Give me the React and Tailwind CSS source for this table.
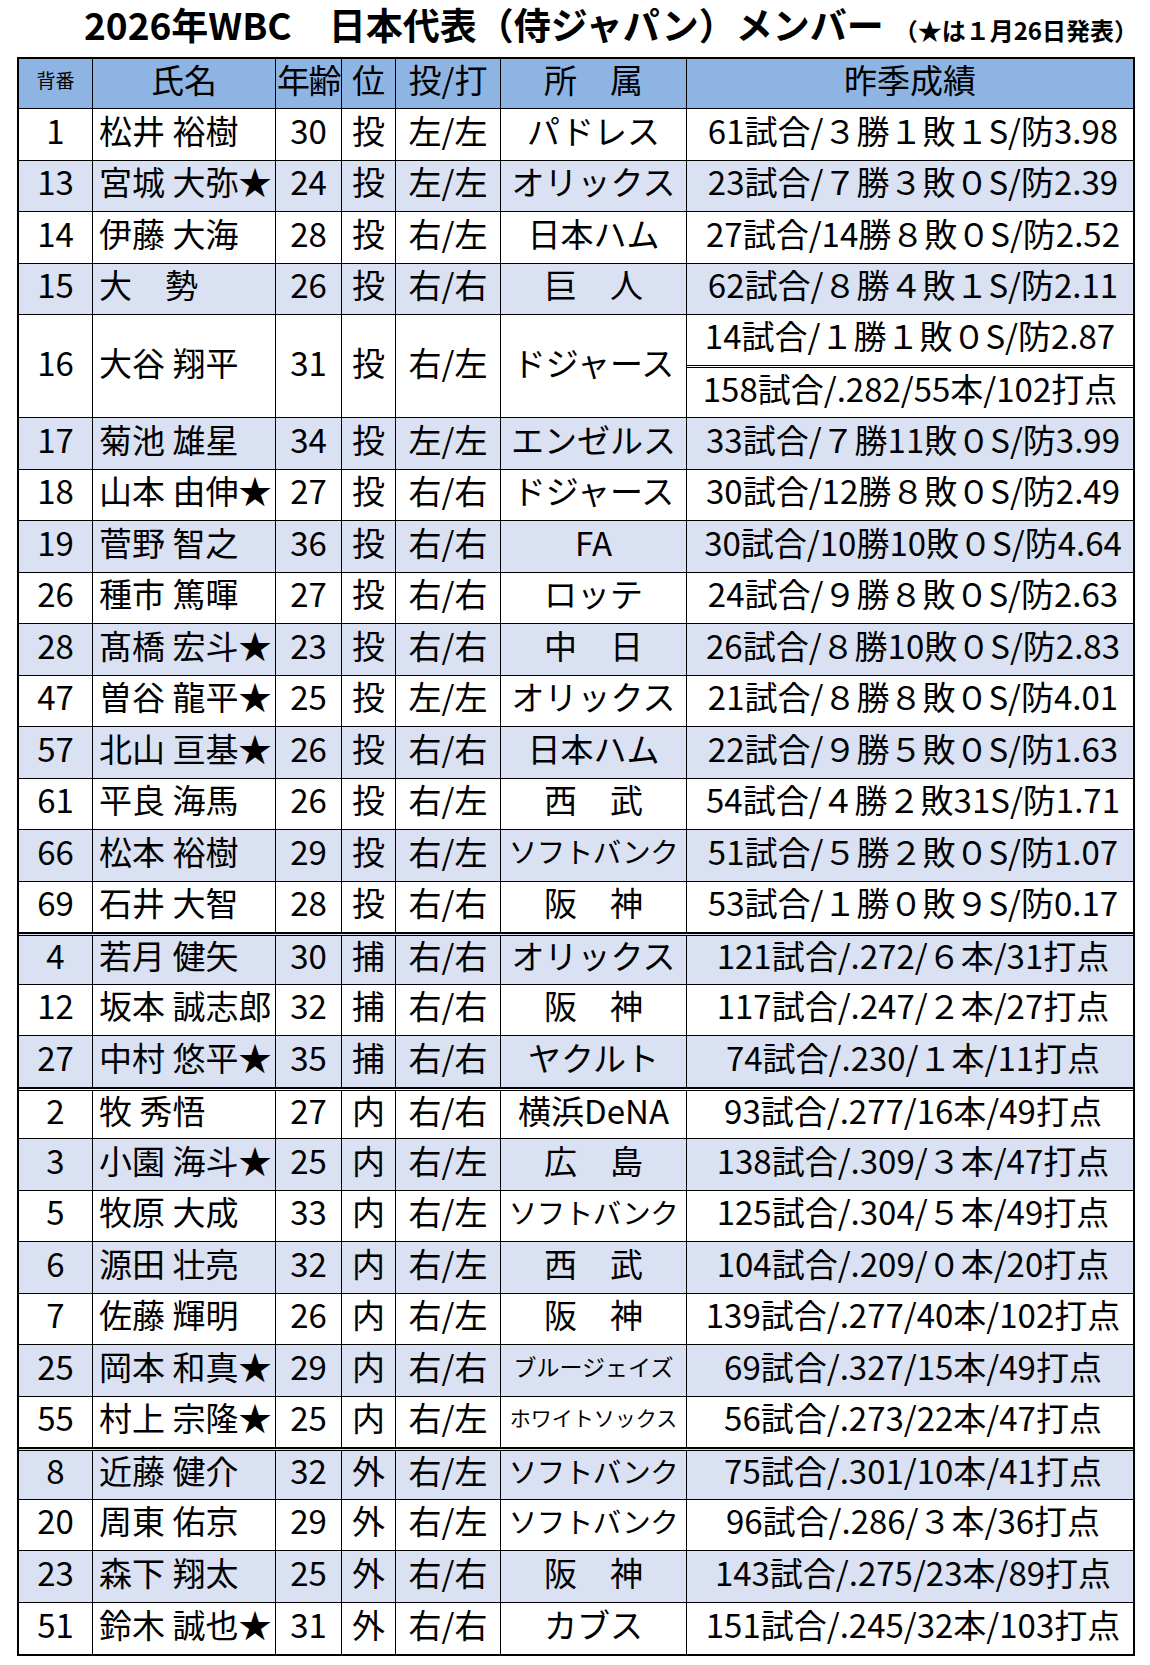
import React from 'react';

// 2026 WBC roster table
const PLAYERS = [
  { no: '1', name: '松井 裕樹', age: '30', pos: '投', hand: '左/左', team: 'パドレス', stat: '61試合/３勝１敗１S/防3.98' },
  { no: '13', name: '宮城 大弥★', age: '24', pos: '投', hand: '左/左', team: 'オリックス', stat: '23試合/７勝３敗０S/防2.39' },
  { no: '14', name: '伊藤 大海', age: '28', pos: '投', hand: '右/左', team: '日本ハム', stat: '27試合/14勝８敗０S/防2.52' },
  { no: '15', name: '大　勢', age: '26', pos: '投', hand: '右/右', team: '巨　人', stat: '62試合/８勝４敗１S/防2.11' },
  { no: '16', name: '大谷 翔平', age: '31', pos: '投', hand: '右/左', team: 'ドジャース', stat: '14試合/１勝１敗０S/防2.87', stat2: '158試合/.282/55本/102打点' },
  { no: '17', name: '菊池 雄星', age: '34', pos: '投', hand: '左/左', team: 'エンゼルス', stat: '33試合/７勝11敗０S/防3.99' },
  { no: '18', name: '山本 由伸★', age: '27', pos: '投', hand: '右/右', team: 'ドジャース', stat: '30試合/12勝８敗０S/防2.49' },
  { no: '19', name: '菅野 智之', age: '36', pos: '投', hand: '右/右', team: 'FA', stat: '30試合/10勝10敗０S/防4.64' },
  { no: '26', name: '種市 篤暉', age: '27', pos: '投', hand: '右/右', team: 'ロッテ', stat: '24試合/９勝８敗０S/防2.63' },
  { no: '28', name: '髙橋 宏斗★', age: '23', pos: '投', hand: '右/右', team: '中　日', stat: '26試合/８勝10敗０S/防2.83' },
  { no: '47', name: '曽谷 龍平★', age: '25', pos: '投', hand: '左/左', team: 'オリックス', stat: '21試合/８勝８敗０S/防4.01' },
  { no: '57', name: '北山 亘基★', age: '26', pos: '投', hand: '右/右', team: '日本ハム', stat: '22試合/９勝５敗０S/防1.63' },
  { no: '61', name: '平良 海馬', age: '26', pos: '投', hand: '右/左', team: '西　武', stat: '54試合/４勝２敗31S/防1.71' },
  { no: '66', name: '松本 裕樹', age: '29', pos: '投', hand: '右/左', team: 'ソフトバンク', small: 'sb', stat: '51試合/５勝２敗０S/防1.07' },
  { no: '69', name: '石井 大智', age: '28', pos: '投', hand: '右/右', team: '阪　神', stat: '53試合/１勝０敗９S/防0.17' },
  { no: '4', name: '若月 健矢', age: '30', pos: '捕', hand: '右/右', team: 'オリックス', stat: '121試合/.272/６本/31打点', sep: true },
  { no: '12', name: '坂本 誠志郎', age: '32', pos: '捕', hand: '右/右', team: '阪　神', stat: '117試合/.247/２本/27打点' },
  { no: '27', name: '中村 悠平★', age: '35', pos: '捕', hand: '右/右', team: 'ヤクルト', stat: '74試合/.230/１本/11打点' },
  { no: '2', name: '牧 秀悟', age: '27', pos: '内', hand: '右/右', team: '横浜DeNA', stat: '93試合/.277/16本/49打点', sep: true },
  { no: '3', name: '小園 海斗★', age: '25', pos: '内', hand: '右/左', team: '広　島', stat: '138試合/.309/３本/47打点' },
  { no: '5', name: '牧原 大成', age: '33', pos: '内', hand: '右/左', team: 'ソフトバンク', small: 'sb', stat: '125試合/.304/５本/49打点' },
  { no: '6', name: '源田 壮亮', age: '32', pos: '内', hand: '右/左', team: '西　武', stat: '104試合/.209/０本/20打点' },
  { no: '7', name: '佐藤 輝明', age: '26', pos: '内', hand: '右/左', team: '阪　神', stat: '139試合/.277/40本/102打点' },
  { no: '25', name: '岡本 和真★', age: '29', pos: '内', hand: '右/右', team: 'ブルージェイズ', small: 'bj', stat: '69試合/.327/15本/49打点' },
  { no: '55', name: '村上 宗隆★', age: '25', pos: '内', hand: '右/左', team: 'ホワイトソックス', small: 'ws', stat: '56試合/.273/22本/47打点' },
  { no: '8', name: '近藤 健介', age: '32', pos: '外', hand: '右/左', team: 'ソフトバンク', small: 'sb', stat: '75試合/.301/10本/41打点', sep: true },
  { no: '20', name: '周東 佑京', age: '29', pos: '外', hand: '右/左', team: 'ソフトバンク', small: 'sb', stat: '96試合/.286/３本/36打点' },
  { no: '23', name: '森下 翔太', age: '25', pos: '外', hand: '右/右', team: '阪　神', stat: '143試合/.275/23本/89打点' },
  { no: '51', name: '鈴木 誠也★', age: '31', pos: '外', hand: '右/右', team: 'カブス', stat: '151試合/.245/32本/103打点' },
];

const TEAM_SIZE = {
  sb: 'text-[28.5px] tracking-[-0.5px]',
  bj: 'text-[23px]',
  ws: 'text-[21px]',
};

const GRID = 'grid grid-cols-[74px_183px_66px_54px_105px_186px_1fr]';
const CELL = 'flex items-center justify-center border-r border-black whitespace-nowrap pb-[8px]';

function PlayerRow({ p, i, last }) {
  const bg = i % 2 ? 'bg-[#d9e1f2]' : 'bg-white';
  const h = p.stat2 ? 'h-[103px]' : 'h-[51.5px]';
  const sep = p.sep ? 'border-t-[3px] border-double border-t-black' : '';
  const bottom = last ? '' : 'border-b border-black';
  const teamCls = p.small ? TEAM_SIZE[p.small] : '';

  return (
    <div className={`${GRID} ${h} ${bg} ${sep} ${bottom}`}>
      <div className={CELL}>{p.no}</div>
      <div className={`${CELL} justify-start! pl-[6px]`}>{p.name}</div>
      <div className={CELL}>{p.age}</div>
      <div className={CELL}>{p.pos}</div>
      <div className={CELL}>{p.hand}</div>
      <div className={`${CELL} ${teamCls}`}>{p.team}</div>
      {p.stat2 ? (
        <div className="flex flex-col whitespace-nowrap">
          <div className="flex-1 flex items-center justify-center pb-[8px] border-b-[3px] border-double border-black">{p.stat}</div>
          <div className="flex-1 flex items-center justify-center pb-[8px]">{p.stat2}</div>
        </div>
      ) : (
        <div className="flex items-center justify-center whitespace-nowrap pl-[6px] pb-[8px]">{p.stat}</div>
      )}
    </div>
  );
}

export default function App() {
  return (
    <div className="w-[1150px] h-[1665px] bg-white text-black font-['Noto_Sans_CJK_JP','Noto_Sans',sans-serif] leading-none">
      {/* Title */}
      <div className="h-[57px] flex items-baseline pl-[84px] pt-[6px]">
        <h1 className="text-[37px] font-bold">2026年WBC　日本代表（侍ジャパン）メンバー</h1>
        <span className="ml-[10px] text-[24px] font-bold">（★は１月26日発表）</span>
      </div>

      {/* Table */}
      <div className="ml-[17px] w-[1118px] border-2 border-black text-[33px]">
        <div className={`${GRID} h-[50px] bg-[#8db4e2] border-b border-black`}>
          <div className={`${CELL} text-[19px]`}>背番</div>
          <div className={CELL}>氏名</div>
          <div className={`${CELL} tracking-[-1.5px]`}>年齢</div>
          <div className={CELL}>位</div>
          <div className={CELL}>投/打</div>
          <div className={CELL}>所　属</div>
          <div className="flex items-center justify-center pb-[8px]">昨季成績</div>
        </div>
        {PLAYERS.map((p, i) => (
          <PlayerRow key={p.no} p={p} i={i} last={i === PLAYERS.length - 1} />
        ))}
      </div>
    </div>
  );
}
